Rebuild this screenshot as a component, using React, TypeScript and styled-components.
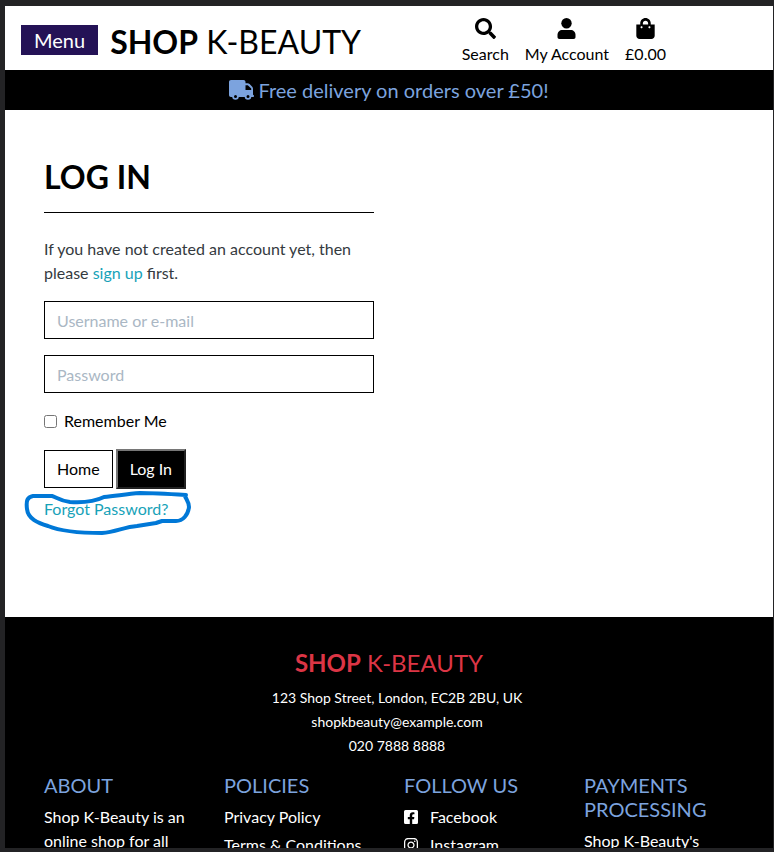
import React from "react";
import styled, { createGlobalStyle, css } from "styled-components";
import {
  FaFacebookSquare,
  FaInstagram,
  FaSearch,
  FaShoppingBag,
} from "react-icons/fa";

const GlobalStyle = createGlobalStyle`
  *, *::before, *::after { box-sizing: border-box; }
  body {
    margin: 0;
    background: #232325;
    color: #000;
    font-family: Lato, "Liberation Sans", sans-serif;
    font-size: 16px;
    line-height: 24px;
  }
  h1, h2, h3, p, ul { margin: 0; padding: 0; }
`;

const Frame = styled.div`
  display: flex;
  height: 100vh;
  padding: 6px 1px 4px 5px;
  background: #232325;
`;

const Page = styled.div`
  flex: 1;
  min-width: 0;
  overflow: hidden;
  background: #fff;
`;

const Header = styled.header`
  display: flex;
  align-items: center;
  height: 64px;
  padding: 0 16px;
`;

const MenuButton = styled.button`
  height: 30px;
  margin: 4px 12px 0 0;
  padding: 0 13px;
  border: 0;
  background: #241256;
  color: #fff;
  font: inherit;
  font-size: 20px;
  line-height: 30px;
`;

const Brand = styled.a<{ $small?: boolean }>`
  color: ${(p) => (p.$small ? "#dc3545" : "#000")};
  font-size: ${(p) => (p.$small ? "24px" : "32px")};
  line-height: ${(p) => (p.$small ? "32px" : "40px")};
  font-weight: 400;
  text-decoration: none;
  white-space: nowrap;
  ${(p) => !p.$small && css`padding-top: 8px;`}

  strong { font-weight: 700; }
`;

const Tools = styled.nav`
  display: flex;
  gap: 16px;
  margin: 0 91px 0 auto;
`;

const Tool = styled.a`
  display: flex;
  flex-direction: column;
  align-items: center;
  gap: 3px;
  padding-top: 8px;
  color: #000;
  text-decoration: none;
  white-space: nowrap;

  svg { width: 21px; height: 21px; }
`;

const Banner = styled.div`
  display: flex;
  align-items: center;
  justify-content: center;
  gap: 4px;
  height: 40px;
  background: #000;
  color: #7ca3de;
  font-size: 20px;

  svg { width: 25px; height: 20px; }
`;

const Container = styled.div`
  width: 720px;
  max-width: 100%;
  margin: 0 auto;
`;

const Main = styled.main`
  padding: 48px 0 96px;
`;

const LoginColumn = styled.section`
  width: 50%;
  padding: 0 15px;
`;

const Title = styled.h1`
  padding-bottom: 16px;
  border-bottom: 1px solid #000;
  font-size: 32px;
  font-weight: 700;
  line-height: 38px;
`;

const Intro = styled.p`
  margin: 24px 0 16px;
  color: #343a40;
`;

const TextLink = styled.a`
  color: #17a2b8;
  text-decoration: none;
`;

const TextField = styled.input`
  display: block;
  width: 100%;
  height: 38px;
  margin-bottom: 16px;
  padding: 6px 12px;
  border: 1px solid #000;
  border-radius: 0;
  background: #fff;
  color: #000;
  font: inherit;

  &::placeholder { color: #aab7c4; opacity: 1; }
`;

const Remember = styled.label`
  display: flex;
  align-items: center;
  gap: 7px;
`;

const Tick = styled.input`
  width: 13px;
  height: 13px;
  margin: 0;
`;

const Actions = styled.div`
  display: flex;
  align-items: center;
  gap: 3px;
  margin-top: 16px;
`;

const HomeLink = styled.a`
  padding: 6px 12px;
  border: 1px solid #000;
  color: #000;
  text-decoration: none;
`;

const SubmitButton = styled.button`
  height: 40px;
  padding: 6px 12px;
  border: 2px solid;
  border-color: #767676 #212121 #212121 #767676;
  background: #000;
  color: #fff;
  font: inherit;
`;

const Forgot = styled.div`
  position: relative;
  margin-top: 8px;
`;

const Scribble = styled.svg`
  position: absolute;
  top: -10px;
  left: -24px;
  width: 176px;
  height: 52px;
  pointer-events: none;
`;

const Footer = styled.footer`
  padding-top: 30px;
  background: #000;
  color: #fff;
`;

const Contact = styled.div`
  text-align: center;
`;

const Address = styled.ul`
  margin-top: 7px;
  padding-left: 16px;
  list-style: none;
  font-size: 14px;
`;

const FooterGrid = styled(Container)`
  display: grid;
  grid-template-columns: repeat(4, 1fr);
  margin-top: 15px;
`;

const FooterColumn = styled.section`
  padding: 0 15px;
`;

const FooterTitle = styled.h3`
  margin-bottom: 8px;
  color: #7ca3de;
  font-size: 20px;
  font-weight: 400;
  line-height: 24px;
`;

const LinkList = styled.ul`
  display: flex;
  flex-direction: column;
  gap: 4px;
  list-style: none;
`;

const FooterLink = styled.a`
  display: flex;
  align-items: center;
  gap: 12px;
  color: #fff;
  text-decoration: none;
  white-space: nowrap;

  svg { width: 14px; height: 16px; }
`;

function BrandName() {
  return (
    <>
      <strong>SHOP</strong> K-BEAUTY
    </>
  );
}

function UserIcon() {
  return (
    <svg viewBox="0 0 21 21" fill="currentColor" aria-hidden="true">
      <circle cx="10.5" cy="5.2" r="5.2" />
      <path d="M6.5 12H14.5C17.5 12 19.5 14 19.5 17V19C19.5 20.3 18.8 21 17.5 21H3.5C2.2 21 1.5 20.3 1.5 19V17C1.5 14 3.5 12 6.5 12Z" />
    </svg>
  );
}

function TruckIcon() {
  return (
    <svg viewBox="0 0 25 20" aria-hidden="true">
      <path
        fill="currentColor"
        fillRule="evenodd"
        d="M2 0H14.5C15.7 0 16.5 .8 16.5 2V3.2H18.5C19.4 3.2 20 3.5 20.6 4.1L23.2 6.8C23.8 7.4 24 8 24 8.8V14.8C24.7 15 25 15.3 25 16C25 16.7 24.6 17 24 17H2C.8 17 0 16.2 0 15V2C0 .8 .8 0 2 0ZM16.5 5.2V10H22.2V8.6L18.8 5.2Z"
      />
      {[6.5, 19].map((cx) => (
        <circle key={cx} cx={cx} cy="16.5" r="2.4" fill="#000" stroke="currentColor" strokeWidth="1.8" />
      ))}
    </svg>
  );
}

export default function App() {
  return (
    <Frame>
      <GlobalStyle />
      <Page>
        <Header>
          <MenuButton type="button">Menu</MenuButton>
          <Brand href="#"><BrandName /></Brand>
          <Tools aria-label="Shop tools">
            <Tool href="#search"><FaSearch />Search</Tool>
            <Tool href="#account"><UserIcon />My Account</Tool>
            <Tool href="#bag"><FaShoppingBag />£0.00</Tool>
          </Tools>
        </Header>
        <Banner><TruckIcon /><span>Free delivery on orders over £50!</span></Banner>
        <Main>
          <Container>
            <LoginColumn>
              <Title>LOG IN</Title>
              <Intro>
                If you have not created an account yet, then please{" "}
                <TextLink href="#signup">sign up</TextLink> first.
              </Intro>
              <form onSubmit={(e) => e.preventDefault()}>
                <TextField type="text" aria-label="Username or e-mail" placeholder="Username or e-mail" />
                <TextField type="password" aria-label="Password" placeholder="Password" />
                <Remember><Tick type="checkbox" />Remember Me</Remember>
                <Actions>
                  <HomeLink href="#home">Home</HomeLink>
                  <SubmitButton type="submit">Log In</SubmitButton>
                </Actions>
                <Forgot>
                  <TextLink href="#reset">Forgot Password?</TextLink>
                  <Scribble viewBox="0 0 176 52" aria-hidden="true">
                    <path
                      d="M166 8 C150 7 134 6 120 6 C106 7 96 9 84 10 C76 14 66 16 50 15 C40 14 36 10 32 9 H13 C7 10 6 14 7 22 C8 32 18 36 28 39 C40 44 58 46 82 46 C96 45 104 40 117 39 L136 36 L142 34 H156 C163 34 168 28 169 20 C169 15 166 12 165 9"
                      fill="none"
                      stroke="#0078d7"
                      strokeWidth="4"
                      strokeLinecap="round"
                      strokeLinejoin="round"
                    />
                  </Scribble>
                </Forgot>
              </form>
            </LoginColumn>
          </Container>
        </Main>
        <Footer>
          <Contact>
            <Brand $small href="#"><BrandName /></Brand>
            <Address>
              <li>123 Shop Street, London, EC2B 2BU, UK</li>
              <li>shopkbeauty@example.com</li>
              <li>020 7888 8888</li>
            </Address>
          </Contact>
          <FooterGrid>
            <FooterColumn>
              <FooterTitle>ABOUT</FooterTitle>
              <p>Shop K-Beauty is an online shop for all</p>
            </FooterColumn>
            <FooterColumn>
              <FooterTitle>POLICIES</FooterTitle>
              <LinkList>
                <li><FooterLink href="#privacy">Privacy Policy</FooterLink></li>
                <li><FooterLink href="#terms">Terms &amp; Conditions</FooterLink></li>
              </LinkList>
            </FooterColumn>
            <FooterColumn>
              <FooterTitle>FOLLOW US</FooterTitle>
              <LinkList>
                <li><FooterLink href="#facebook"><FaFacebookSquare />Facebook</FooterLink></li>
                <li><FooterLink href="#instagram"><FaInstagram />Instagram</FooterLink></li>
              </LinkList>
            </FooterColumn>
            <FooterColumn>
              <FooterTitle>PAYMENTS PROCESSING</FooterTitle>
              <p>Shop K-Beauty's</p>
            </FooterColumn>
          </FooterGrid>
        </Footer>
      </Page>
    </Frame>
  );
}
